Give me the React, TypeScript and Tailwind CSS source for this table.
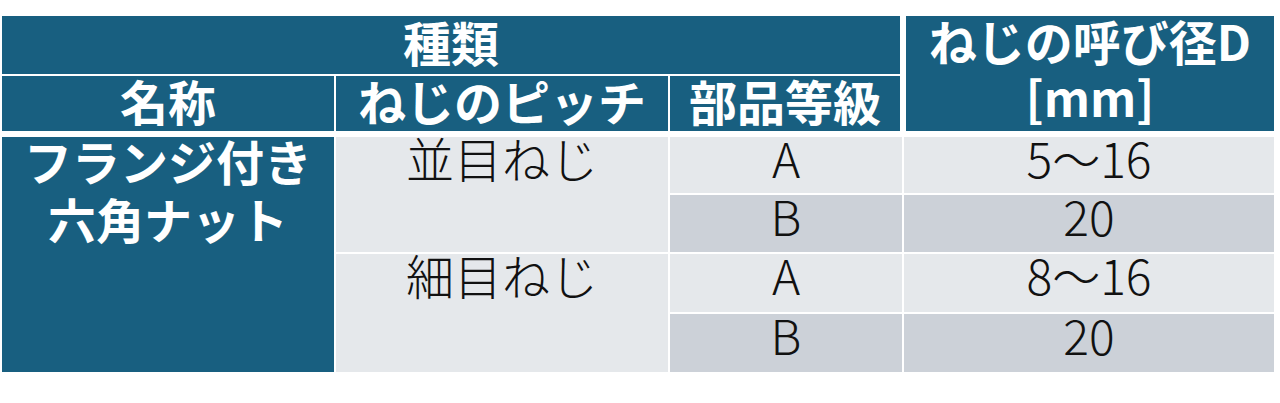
import React from "react";

const font = { fontFamily: '"Noto Sans CJK JP", "Noto Sans", sans-serif' };

const head =
  "bg-[#185f80] text-white font-bold text-[48px] leading-[48px] flex items-center justify-center pb-[8px]";
const light =
  "bg-[#e5e8eb] text-[#111] font-light text-[48px] leading-[40px] flex justify-center items-start";
const dark =
  "bg-[#ccd1d8] text-[#111] font-light text-[48px] leading-[40px] flex justify-center items-start";

export default function App() {
  return (
    <div
      className="w-[1280px] h-[403px] bg-white pt-[16px] pl-[2px]"
      style={font}
    >
      <div className="grid grid-cols-[332px_332px_232px_370px] grid-rows-[58px_55px_2px_56px_57px_58px_58px] gap-[2px]">
        {/* Header row 1 */}
        <div className={`col-span-3 mr-[2px] ${head}`}>種類</div>
        <div className="row-span-2 ml-[2px] bg-[#185f80] text-white font-bold text-[48px] leading-[56px] flex flex-col items-center justify-center pb-[12px]">
          <span>ねじの呼び径D</span>
          <span>[mm]</span>
        </div>
        {/* Header row 2 */}
        <div className={head}>名称</div>
        <div className={head}>ねじのピッチ</div>
        <div className={`mr-[2px] ${head}`}>部品等級</div>
        {/* spacer row */}
        <div className="col-span-4" />
        {/* Body */}
        <div className="row-span-4 bg-[#185f80] text-white font-bold text-[48px] leading-[58px] flex justify-center items-start">
          <div className="mt-[-6px] text-center">
            フランジ付き
            <br />
            六角ナット
          </div>
        </div>
        <div className={`row-span-2 ${light}`}>並目ねじ</div>
        <div className={light}>A</div>
        <div className={light}>5～16</div>
        <div className={dark}>B</div>
        <div className={dark}>20</div>
        <div className={`row-span-2 ${light}`}>細目ねじ</div>
        <div className={light}>A</div>
        <div className={light}>8～16</div>
        <div className={dark}>B</div>
        <div className={dark}>20</div>
      </div>
    </div>
  );
}
